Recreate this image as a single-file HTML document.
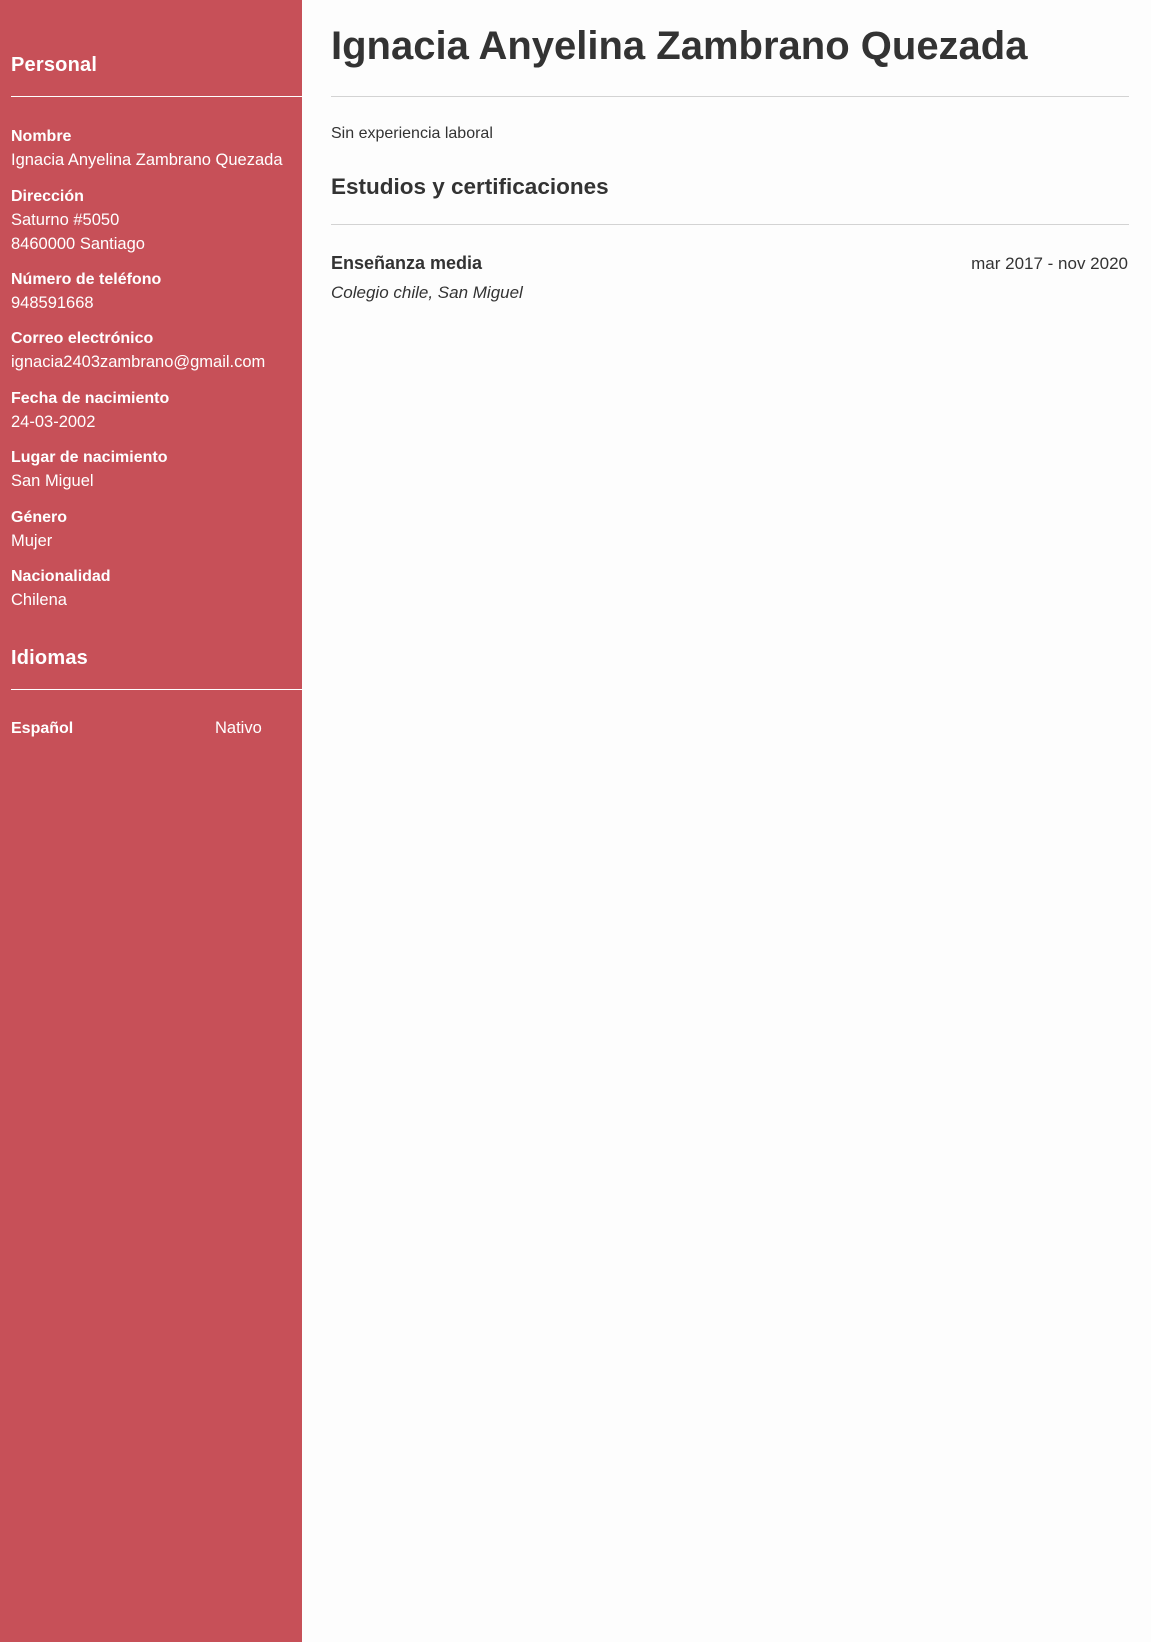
<!DOCTYPE html>
<html><head><meta charset="utf-8"><style>
*{margin:0;padding:0;box-sizing:border-box}
body{width:1151px;height:1642px;background:#fdfdfd;font-family:"Liberation Sans",sans-serif;color:#333;position:relative;overflow:hidden}
.side{position:absolute;left:0;top:0;width:302px;height:1642px;background:#c75058;color:#fff}
.a{position:absolute;white-space:nowrap}
.h{font-size:20px;left:11px;font-weight:bold;letter-spacing:0.2px}
.rule{position:absolute;left:11px;width:291px;height:1px;background:#fff}
.l{font-size:16px;font-weight:bold;left:11px}
.v{font-size:16.5px;left:11px}
.main .a{left:331px}
.hr{position:absolute;left:331px;width:798px;height:1px;background:#d3d3d3}
</style></head><body>
<div class="side">
<div class="a h" style="top:54px">Personal</div>
<div class="rule" style="top:96px"></div>
<div class="a l" style="top:128px">Nombre</div>
<div class="a v" style="top:151px">Ignacia Anyelina Zambrano Quezada</div>
<div class="a l" style="top:188px">Dirección</div>
<div class="a v" style="top:211px">Saturno #5050</div>
<div class="a v" style="top:235px">8460000 Santiago</div>
<div class="a l" style="top:271px">Número de teléfono</div>
<div class="a v" style="top:294px">948591668</div>
<div class="a l" style="top:330px">Correo electrónico</div>
<div class="a v" style="top:353px">ignacia2403zambrano@gmail.com</div>
<div class="a l" style="top:390px">Fecha de nacimiento</div>
<div class="a v" style="top:413px">24-03-2002</div>
<div class="a l" style="top:449px">Lugar de nacimiento</div>
<div class="a v" style="top:472px">San Miguel</div>
<div class="a l" style="top:509px">Género</div>
<div class="a v" style="top:532px">Mujer</div>
<div class="a l" style="top:568px">Nacionalidad</div>
<div class="a v" style="top:591px">Chilena</div>
<div class="a h" style="top:647px">Idiomas</div>
<div class="rule" style="top:689px"></div>
<div class="a l" style="top:720px">Español</div>
<div class="a v" style="top:719px;left:215px">Nativo</div>
</div>
<div class="main">
<div class="a" style="top:24px;font-size:40px;font-weight:bold">Ignacia Anyelina Zambrano Quezada</div>
<div class="hr" style="top:96px"></div>
<div class="a" style="top:125px;font-size:16px">Sin experiencia laboral</div>
<div class="a" style="top:174px;font-size:22.5px;font-weight:bold">Estudios y certificaciones</div>
<div class="hr" style="top:224px"></div>
<div class="a" style="top:253px;font-size:18px;font-weight:bold">Enseñanza media</div>
<div class="a" style="top:254px;left:auto!important;right:23px;font-size:17px">mar 2017 - nov 2020</div>
<div class="a" style="top:283px;font-size:17px;font-style:italic">Colegio chile, San Miguel</div>
</div>
</body></html>
